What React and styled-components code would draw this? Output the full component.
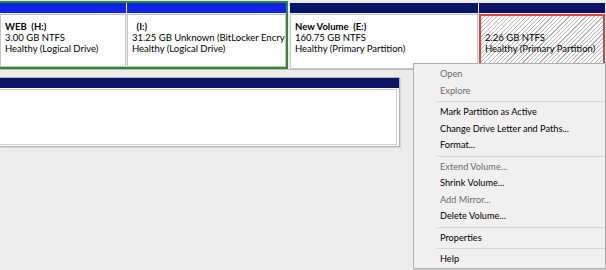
import React from "react";
import styled, { createGlobalStyle } from "styled-components";

const GlobalStyle = createGlobalStyle`
  html, body {
    margin: 0;
    padding: 0;
    background: #ececec;
    font-family: Lato, "Noto Sans", sans-serif;
    font-size: 9.5px;
    overflow: hidden;
  }
`;

const Page = styled.div`
  position: relative;
  width: 606px;
  height: 270px;
  overflow: hidden;
`;

const DiskRow = styled.div`
  display: flex;
  height: 68px;
  padding-top: 1px;
  border-bottom: 1px solid #b9b9b9;
  width: 620px;
`;

const Extended = styled.div`
  display: flex;
  gap: 1px;
  border: 2px solid #2f8a2f;
  border-left: none;
  margin-right: 2px;
`;

const Volume = styled.div`
  display: flex;
  flex-direction: column;
  width: ${(p) => p.$width}px;
  padding: ${(p) => (p.$inset ? "2px 0 0" : "0")};
  margin-right: ${(p) => p.$gap || 0}px;
`;

const Header = styled.div`
  height: 10px;
  flex-shrink: 0;
  background: ${(p) => p.$color};
`;

const Body = styled.div`
  flex: 1;
  min-height: 0;
  margin-top: 1px;
  background: #fff;
  border: 1px solid #c6c6c6;
  padding: 6px 4px 0;
  line-height: 11px;
  color: #000;
  white-space: pre;
  overflow: hidden;
`;

const Selected = styled(Body)`
  margin-bottom: 4px;
  border: 2px solid #e0433b;
  padding: 5px 4px 0;
  background: repeating-linear-gradient(
    135deg,
    #fff 0,
    #fff 2.2px,
    #b5b5b5 2.2px,
    #b5b5b5 3px
  );
`;

const Name = styled.div`
  font-weight: bold;
  min-height: 11px;
`;

const Line = styled.div``;

const DiskBlock = styled.div`
  width: 399px;
  height: 68px;
  margin-top: 7px;
  display: flex;
  flex-direction: column;
  border: 1px solid #b4b4b4;
  border-left: none;
  box-shadow: 1px 1px 0 #d6d6d6;
  background: #fff;
`;

const BlockBody = styled.div`
  flex: 1;
  margin: 1px 2px 1px 0;
  border: 1px solid #d0d0d0;
  border-left: none;
  background: #fff;
`;

const Menu = styled.div`
  position: absolute;
  left: 413px;
  top: 63px;
  width: 191px;
  padding-top: 2px;
  background: #f0f0f0;
  border: 1px solid #b0b0b0;
  box-shadow: 2px 2px 2px rgba(0, 0, 0, 0.12);
  font-size: 9.2px;
`;

const Item = styled.div`
  height: 16.5px;
  line-height: 16.5px;
  padding-left: 26px;
  color: ${(p) => (p.$disabled ? "#6d6d6d" : "#000")};
  white-space: nowrap;
`;

const Separator = styled.div`
  height: 1px;
  margin: 2px 0 2px 23px;
  background: #d7d7d7;
`;

const menu = [
  ["Open", true],
  ["Explore", true],
  "-",
  ["Mark Partition as Active"],
  ["Change Drive Letter and Paths..."],
  ["Format..."],
  "-",
  ["Extend Volume...", true],
  ["Shrink Volume..."],
  ["Add Mirror...", true],
  ["Delete Volume..."],
  "-",
  ["Properties"],
  "-",
  ["Help"],
];

export default function App() {
  return (
    <Page>
      <GlobalStyle />
      <DiskRow>
        <Extended>
          <Volume $width={126}>
            <Header $color="#1023e6" />
            <Body>
              <Name>WEB  (H:)</Name>
              <Line>3.00 GB NTFS</Line>
              <Line>Healthy (Logical Drive)</Line>
            </Body>
          </Volume>
          <Volume $width={159}>
            <Header $color="#1023e6" />
            <Body>
              <Name>  (I:)</Name>
              <Line>31.25 GB Unknown (BitLocker Encrypted)</Line>
              <Line>Healthy (Logical Drive)</Line>
            </Body>
          </Volume>
        </Extended>
        <Volume $width={188} $inset $gap={1}>
          <Header $color="#0b1366" />
          <Body>
            <Name>New Volume  (E:)</Name>
            <Line>160.75 GB NTFS</Line>
            <Line>Healthy (Primary Partition)</Line>
          </Body>
        </Volume>
        <Volume $width={126} $inset>
          <Header $color="#0b1366" />
          <Selected>
            <Name />
            <Line>2.26 GB NTFS</Line>
            <Line>Healthy (Primary Partition)</Line>
          </Selected>
        </Volume>
      </DiskRow>
      <DiskBlock>
        <Header $color="#0b1366" />
        <BlockBody />
      </DiskBlock>
      <Menu>
        {menu.map((m, i) =>
          m === "-" ? (
            <Separator key={i} />
          ) : (
            <Item key={i} $disabled={m[1]}>
              {m[0]}
            </Item>
          )
        )}
      </Menu>
    </Page>
  );
}
